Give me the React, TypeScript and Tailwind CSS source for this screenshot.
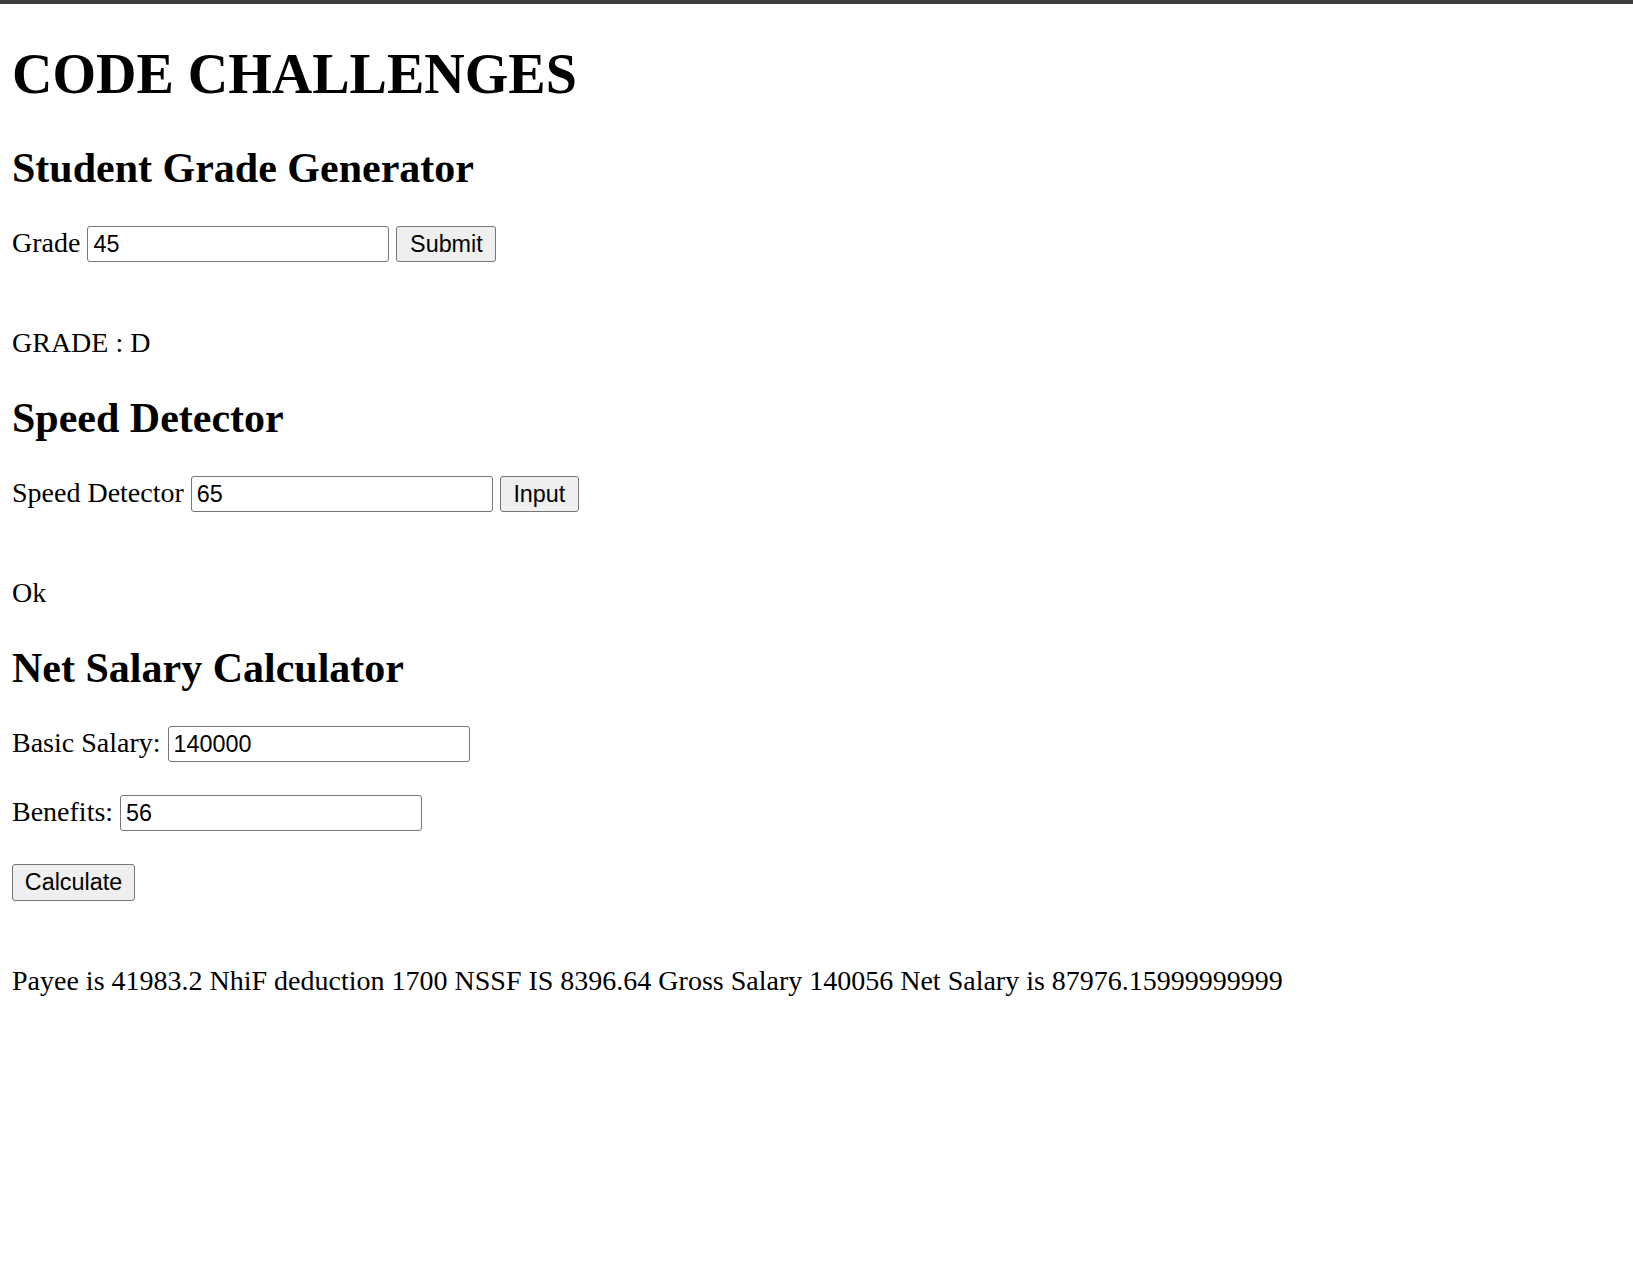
const inputClass =
  "h-[36px] w-[302px] shrink-0 rounded-[3px] border border-[#767676] bg-white px-[5px] text-[23.33px] text-black font-['Liberation_Sans',Arial,sans-serif] outline-none";

const buttonClass =
  "h-[36px] shrink-0 rounded-[3px] border border-[#767676] bg-[#efefef] text-center text-[23.33px] text-black font-['Liberation_Sans',Arial,sans-serif]";

function Row({
  label,
  value,
  action,
  actionWidth,
  top,
}: {
  label: string;
  value: string;
  action?: string;
  actionWidth?: string;
  top: string;
}) {
  return (
    <div className={`flex items-start gap-[7px] ${top}`}>
      <span className="mt-[1px] leading-[31px]">{label}</span>
      <input className={inputClass} type="text" defaultValue={value} />
      {action && (
        <button className={`${buttonClass} ${actionWidth}`}>{action}</button>
      )}
    </div>
  );
}

export default function App() {
  return (
    <div className="min-h-screen bg-white text-black font-['Liberation_Serif','Times_New_Roman',serif] text-[28px]">
      <div className="h-[4px] bg-[#3c3c3c]" />

      <div className="flex flex-col pl-[12px]">
        <h1 className="mt-[39px] text-[56px] font-bold leading-[62px]">
          CODE CHALLENGES
        </h1>

        {/* Grades */}
        <h2 className="mt-[40px] text-[42px] font-bold leading-[46px]">
          Student Grade Generator
        </h2>
        <Row
          top="mt-[35px]"
          label="Grade"
          value="45"
          action="Submit"
          actionWidth="w-[100px]"
        />
        <p className="mt-[65px] leading-[31px]">GRADE : D</p>

        {/* Speed */}
        <h2 className="mt-[37px] text-[42px] font-bold leading-[46px]">
          Speed Detector
        </h2>
        <Row
          top="mt-[35px]"
          label="Speed Detector"
          value="65"
          action="Input"
          actionWidth="w-[79px]"
        />
        <p className="mt-[65px] leading-[31px]">Ok</p>

        {/* Salary */}
        <h2 className="mt-[37px] text-[42px] font-bold leading-[46px]">
          Net Salary Calculator
        </h2>
        <Row top="mt-[35px]" label="Basic Salary:" value="140000" />
        <Row top="mt-[33px]" label="Benefits:" value="56" />
        <div className="mt-[33px] flex">
          <button className={`${buttonClass} h-[37px] w-[123px]`}>
            Calculate
          </button>
        </div>
        <p className="mt-[64px] leading-[31px]">
          Payee is 41983.2 NhiF deduction 1700 NSSF IS 8396.64 Gross Salary
          140056 Net Salary is 87976.15999999999
        </p>
      </div>
    </div>
  );
}
